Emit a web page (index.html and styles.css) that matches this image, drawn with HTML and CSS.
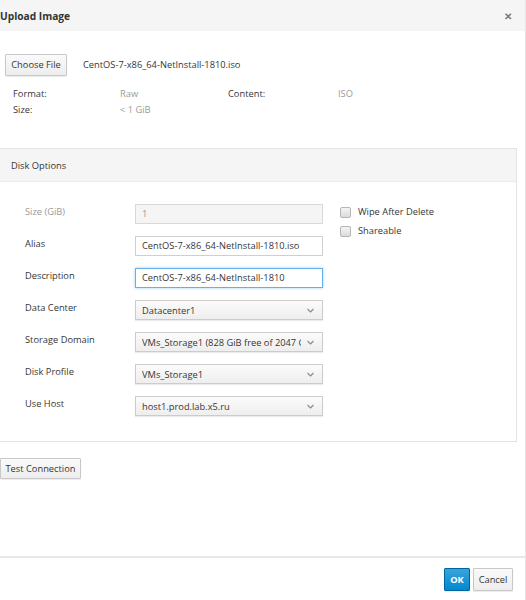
FILE: index.html
```html
<!DOCTYPE html>
<html>
<head>
<meta charset="utf-8">
<link rel="stylesheet" href="styles.css">
</head>
<body>
<div class="dialog">
  <div class="header">
    <span class="title">Upload Image</span>
    <span class="close">&#x2715;</span>
  </div>
  <div class="body">
    <div class="file-row">
      <button class="btn">Choose File</button>
      <span class="filename">CentOS-7-x86_64-NetInstall-1810.iso</span>
    </div>
    <div class="info">
      <span class="k">Format:</span><span class="v">Raw</span><span class="k">Content:</span><span class="v">ISO</span>
      <span class="k">Size:</span><span class="v">&lt; 1 GiB</span><span></span><span></span>
    </div>
    <div class="panel">
      <div class="panel-head">Disk Options</div>
      <div class="panel-body">
        <div class="form">
          <div class="row"><label class="lbl dis">Size (GiB)</label><div class="input disabled">1</div></div>
          <div class="row"><label class="lbl">Alias</label><div class="input">CentOS-7-x86_64-NetInstall-1810.iso</div></div>
          <div class="row"><label class="lbl">Description</label><div class="input focus">CentOS-7-x86_64-NetInstall-1810</div></div>
          <div class="row"><label class="lbl">Data Center</label><div class="select"><span class="sv">Datacenter1</span><svg class="chev" width="7" height="5" viewBox="0 0 7 5"><path d="M0.5 1 L3.5 4 L6.5 1" fill="none" stroke="#888" stroke-width="1.1"/></svg></div></div>
          <div class="row"><label class="lbl">Storage Domain</label><div class="select"><span class="sv">VMs_Storage1 (828 GiB free of 2047 GiB)</span><svg class="chev" width="7" height="5" viewBox="0 0 7 5"><path d="M0.5 1 L3.5 4 L6.5 1" fill="none" stroke="#888" stroke-width="1.1"/></svg></div></div>
          <div class="row"><label class="lbl">Disk Profile</label><div class="select"><span class="sv">VMs_Storage1</span><svg class="chev" width="7" height="5" viewBox="0 0 7 5"><path d="M0.5 1 L3.5 4 L6.5 1" fill="none" stroke="#888" stroke-width="1.1"/></svg></div></div>
          <div class="row"><label class="lbl">Use Host</label><div class="select"><span class="sv">host1.prod.lab.x5.ru</span><svg class="chev" width="7" height="5" viewBox="0 0 7 5"><path d="M0.5 1 L3.5 4 L6.5 1" fill="none" stroke="#888" stroke-width="1.1"/></svg></div></div>
        </div>
        <div class="checks">
          <div class="chk"><span class="box"></span>Wipe After Delete</div>
          <div class="chk"><span class="box"></span>Shareable</div>
        </div>
      </div>
    </div>
    <div class="test-row"><button class="btn">Test Connection</button></div>
  </div>
  <div class="footer">
    <button class="btn primary">OK</button>
    <button class="btn">Cancel</button>
  </div>
</div>
</body>
</html>
```
FILE: styles.css
```css
* { box-sizing: border-box; }
html, body { margin: 0; padding: 0; background: #fff; }
body { font-family: "Open Sans", "Liberation Sans", sans-serif; font-size: 9.3px; color: #363636; width: 526px; height: 600px; overflow: hidden; }
.dialog { width: 526px; height: 600px; display: flex; flex-direction: column; border-right: 1px solid #e6e6e6; }
.header { height: 31px; background: #f5f5f5; display: flex; align-items: center; justify-content: space-between; padding: 0 13px 0 0; flex: none; }
.title { font-weight: 700; font-size: 10.2px; color: #333; }
.close { font-size: 10px; color: #777; font-weight: 700; }
.body { flex: 1; padding: 22px 0 0 0; }
.file-row { display: flex; align-items: center; padding-left: 5px; height: 23px; }
.btn { font-family: inherit; font-size: 9.3px; color: #363636; background: linear-gradient(#fafafa, #ededed); border: 1px solid #c8c8c8; border-radius: 1px; height: 22px; padding: 0 5px; box-shadow: 0 1px 1px rgba(0,0,0,0.08); cursor: default; white-space: nowrap; }
.file-row .btn { width: 62px; height: 22px; padding: 0; }
.filename { margin-left: 16px; color: #363636; }
.info { display: grid; grid-template-columns: 107px 108px 110px auto; padding-left: 13px; margin-top: 10px; row-gap: 0; line-height: 16px; }
.info .v { color: #9a9a9a; }
.panel { margin-top: 30px; width: 517px; border: 1px solid #e3e3e3; border-left: none; height: 294px; }
.panel-head { height: 33px; background: #f5f5f5; border-bottom: 1px solid #ebebeb; padding-left: 11px; display: flex; align-items: center; color: #363636; }
.panel-body { display: flex; padding-top: 22px; }
.form { display: flex; flex-direction: column; gap: 12px; padding-left: 25px; }
.row { display: flex; align-items: flex-start; height: 20px; }
.lbl { width: 110px; line-height: 16px; margin-top: 0; }
.lbl.dis { color: #999; }
.input { width: 188px; height: 20px; border: 1px solid #cfcfcf; padding: 0 6px; line-height: 18px; color: #363636; white-space: nowrap; overflow: hidden; }
.input.disabled { background: #f5f5f5; color: #999; border-color: #d8d8d8; }
.input.focus { border-color: #66afe9; box-shadow: 0 0 3px rgba(102,175,233,0.6); }
.select { width: 188px; height: 20px; border: 1px solid #cccccc; background: linear-gradient(#fbfbfb, #eeeeee); box-shadow: 0 1px 1px rgba(0,0,0,0.08); padding: 0 8px 0 6px; display: flex; align-items: center; gap: 6px; color: #363636; }
.sv { flex: 1; white-space: nowrap; overflow: hidden; }
.chev { flex: none; }
.checks { padding-left: 17px; display: flex; flex-direction: column; gap: 7px; padding-top: 2px; }
.chk { display: flex; align-items: center; gap: 7px; line-height: 12px; }
.box { width: 11px; height: 11px; border: 1px solid #b5b5b5; border-radius: 2px; background: linear-gradient(#f4f4f4, #dcdcdc); }
.test-row { margin-top: 16px; }
.test-row .btn { width: 81px; height: 21px; padding: 0; }
.footer { flex: none; height: 44px; border-top: 2px solid #e8e8e8; display: flex; justify-content: flex-end; align-items: flex-start; padding: 10px 12px 0 0; gap: 3px; }
.footer .btn { height: 23px; }
.btn.primary { background: linear-gradient(#39a5dc, #0088ce); border-color: #00659c; color: #fff; font-weight: 700; width: 26px; padding: 0; }
.footer .btn:not(.primary) { width: 40px; padding: 0; }
```
